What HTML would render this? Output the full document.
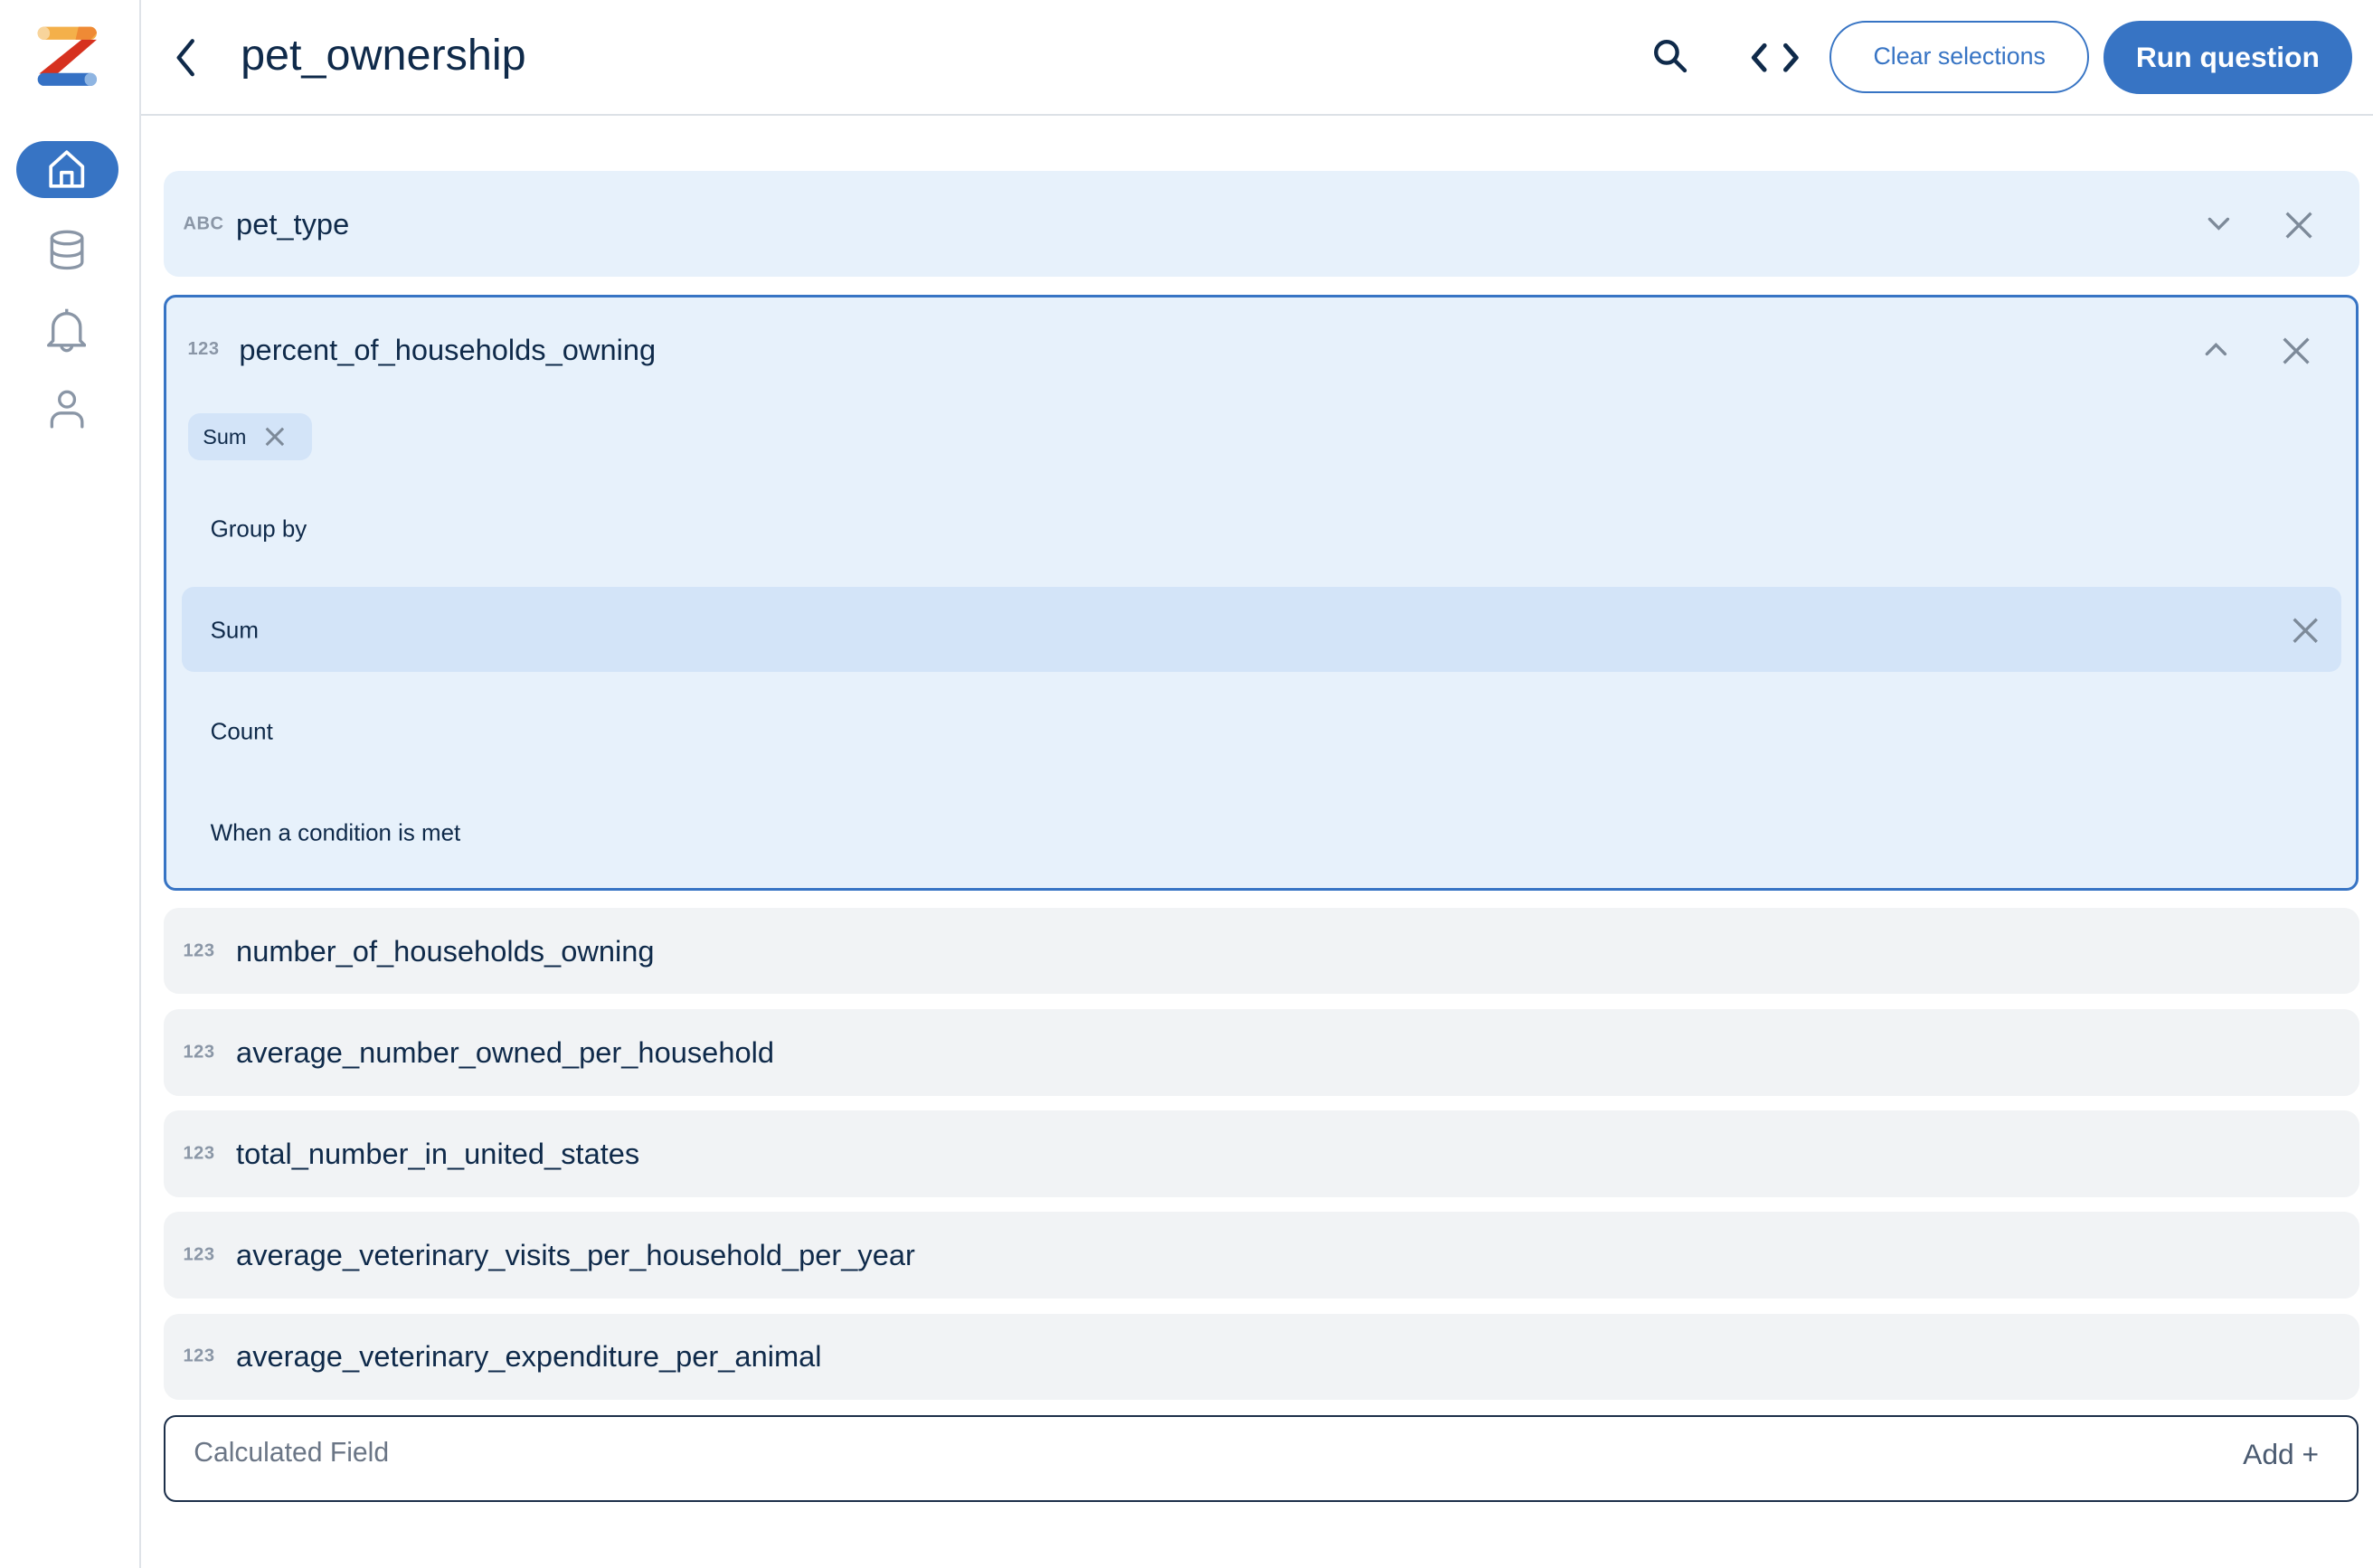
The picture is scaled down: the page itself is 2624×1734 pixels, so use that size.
<!DOCTYPE html>
<html><head><meta charset="utf-8">
<style>
html,body{margin:0;padding:0;background:#fff;overflow:hidden}
body{width:2624px;height:1734px}
#w{position:absolute;left:0;top:0;width:1568px;height:1036px;zoom:1.6735;font-family:"Liberation Sans",sans-serif;color:#0f2a4a}
.a{position:absolute}
.side{left:0;top:0;width:92px;height:1036px;border-right:1.5px solid #dfe3e8}
.hdr{left:93px;top:0;right:0;height:75px;border-bottom:1.5px solid #dce1e6}
.row{position:absolute;left:108px;width:1451px;border-radius:10px;background:#f1f3f5}
.row .t{position:absolute;left:48px;font-size:19.5px;top:50%;transform:translateY(-50%);white-space:nowrap}
.row .ic{position:absolute;left:13px;top:50%;transform:translateY(-50%);font-size:12px;font-weight:bold;color:#8a96a6;letter-spacing:0.3px}
.opt{position:absolute;left:139px;font-size:15.5px;transform:translateY(-50%)}
</style></head><body>
<div id="w">
<div class="a side"></div>
<svg class="a" style="left:24px;top:17px" width="42" height="42" viewBox="0 0 42 42">
<rect x="1" y="1" width="39" height="8.5" rx="4.25" fill="#f4b04a"/>
<rect x="1" y="1" width="8" height="8.5" rx="4" fill="#f8d49b"/>
<path d="M28 1 H36 a4.25 4.25 0 0 1 4 4.25 L36 9.5 H26 Z" fill="#ef8a35"/>
<path d="M30 9.5 H40 L14 32 H2 Z" fill="#d6311f"/>
<rect x="1" y="31.5" width="39" height="8.5" rx="4.25" fill="#3571c4"/>
<rect x="32" y="31.5" width="8" height="8.5" rx="4" fill="#8fb5e2"/>
</svg>
<div class="a" style="left:11px;top:93px;width:67px;height:38px;border-radius:19px;background:#3774c4"></div>
<svg class="a" style="left:31px;top:98px" width="26" height="28" viewBox="0 0 26 28" fill="none" stroke="#fff" stroke-width="2.2" stroke-linejoin="round">
<path d="M2.5 12 L13 2.5 L23.5 12 V25 H2.5 Z"/><path d="M9.5 25 V16 H16.5 V25"/></svg>
<svg class="a" style="left:32px;top:151px" width="24" height="28" viewBox="0 0 24 28" fill="none" stroke="#8a96a6" stroke-width="2">
<ellipse cx="12" cy="6" rx="10" ry="4"/><path d="M2 6 V22 c0 2.5 4.5 4 10 4 s10-1.5 10-4 V6"/><path d="M2 14 c0 2.5 4.5 4 10 4 s10-1.5 10-4"/></svg>
<svg class="a" style="left:31px;top:203px" width="26" height="30" viewBox="0 0 26 30" fill="none" stroke="#8a96a6" stroke-width="2" stroke-linejoin="round">
<path d="M13 1 V4"/><path d="M4 22 V13 a9 9 0 0 1 18 0 V22 L25 25 H1 Z"/><path d="M9.5 25 a3.5 3.5 0 0 0 7 0"/></svg>
<svg class="a" style="left:32px;top:257px" width="24" height="26" viewBox="0 0 24 26" fill="none" stroke="#8a96a6" stroke-width="2" stroke-linecap="round">
<circle cx="12" cy="7" r="5"/><path d="M2 25 V22 a6 6 0 0 1 6-6 H16 a6 6 0 0 1 6 6 V25"/></svg>

<div class="a hdr"></div>
<svg class="a" style="left:114px;top:25px" width="18" height="26" viewBox="0 0 18 26" fill="none" stroke="#0f2a4a" stroke-width="2.6" stroke-linecap="round" stroke-linejoin="round"><path d="M13 2 L4 13 L13 24"/></svg>
<div class="a" style="left:159px;top:20px;font-size:29px;color:#0f2a4a">pet_ownership</div>
<svg class="a" style="left:1092px;top:25px" width="24" height="24" viewBox="0 0 24 24" fill="none" stroke="#0f2a4a" stroke-width="2.6" stroke-linecap="round"><circle cx="9.5" cy="9.5" r="7"/><path d="M15 15 L21.5 21.5"/></svg>
<svg class="a" style="left:1157px;top:28px" width="32" height="20" viewBox="0 0 32 20" fill="none" stroke="#0f2a4a" stroke-width="3" stroke-linecap="round" stroke-linejoin="round"><path d="M9 2 L2 10 L9 18"/><path d="M23 2 L30 10 L23 18"/></svg>
<div class="a" style="left:1209px;top:14px;width:169px;height:45px;border:1.5px solid #3774c4;border-radius:24px;color:#3774c4;font-size:16px;line-height:45px;text-align:center">Clear selections</div>
<div class="a" style="left:1390px;top:14px;width:164px;height:48px;background:#3774c4;border-radius:24px;color:#fff;font-size:19px;font-weight:bold;line-height:48px;text-align:center">Run question</div>

<div class="row" style="top:113px;height:70px;background:#e7f1fb"><span class="ic">ABC</span><span class="t">pet_type</span>
<svg class="a" style="left:1350px;top:30px" width="16" height="10" viewBox="0 0 16 10" fill="none" stroke="#7d8a99" stroke-width="2" stroke-linecap="round"><path d="M2 2 L8 8 L14 2"/></svg>
<svg class="a" style="left:1402px;top:27px" width="18" height="18" viewBox="0 0 18 18" stroke="#7d8a99" stroke-width="2"><path d="M1 1 L17 17 M17 1 L1 17"/></svg>
</div>

<div class="a" style="left:108px;top:195px;width:1447px;height:390px;border:2px solid #3774c4;border-radius:8px;background:#e7f1fb"></div>
<div class="a" style="left:124px;top:224px;font-size:12px;font-weight:bold;color:#8a96a6;letter-spacing:0.3px">123</div>
<div class="a" style="left:158px;top:220px;font-size:19.5px">percent_of_households_owning</div>
<svg class="a" style="left:1456px;top:226px" width="16" height="10" viewBox="0 0 16 10" fill="none" stroke="#7d8a99" stroke-width="2" stroke-linecap="round"><path d="M2 8 L8 2 L14 8"/></svg>
<svg class="a" style="left:1508px;top:223px" width="18" height="18" viewBox="0 0 18 18" stroke="#7d8a99" stroke-width="2"><path d="M1 1 L17 17 M17 1 L1 17"/></svg>
<div class="a" style="left:124px;top:273px;width:82px;height:31px;border-radius:8px;background:#d3e4f8"></div>
<div class="a" style="left:134px;top:281px;font-size:14px">Sum</div>
<svg class="a" style="left:175px;top:282px" width="13" height="13" viewBox="0 0 13 13" stroke="#7d8a99" stroke-width="1.8"><path d="M1 1 L12 12 M12 1 L1 12"/></svg>
<div class="opt" style="top:350px">Group by</div>
<div class="a" style="left:120px;top:388px;width:1427px;height:56px;border-radius:8px;background:#d3e4f8"></div>
<div class="opt" style="top:417px">Sum</div>
<svg class="a" style="left:1515px;top:408px" width="17" height="17" viewBox="0 0 17 17" stroke="#7d8a99" stroke-width="2"><path d="M1 1 L16 16 M16 1 L1 16"/></svg>
<div class="opt" style="top:484px">Count</div>
<div class="opt" style="top:551px">When a condition is met</div>

<div class="row" style="top:600px;height:57px"><span class="ic">123</span><span class="t">number_of_households_owning</span></div>
<div class="row" style="top:667px;height:57px"><span class="ic">123</span><span class="t">average_number_owned_per_household</span></div>
<div class="row" style="top:734px;height:57px"><span class="ic">123</span><span class="t">total_number_in_united_states</span></div>
<div class="row" style="top:801px;height:57px"><span class="ic">123</span><span class="t">average_veterinary_visits_per_household_per_year</span></div>
<div class="row" style="top:868px;height:57px"><span class="ic">123</span><span class="t">average_veterinary_expenditure_per_animal</span></div>

<div class="a" style="left:108px;top:935px;width:1448px;height:55px;border:1.5px solid #1c2f4a;border-radius:8px;background:#fff"></div>
<div class="a" style="left:128px;top:950px;font-size:18px;color:#6b7686">Calculated Field</div>
<div class="a" style="left:1482px;top:950px;font-size:19px;color:#4a5a70">Add +</div>
</div>
</body></html>
